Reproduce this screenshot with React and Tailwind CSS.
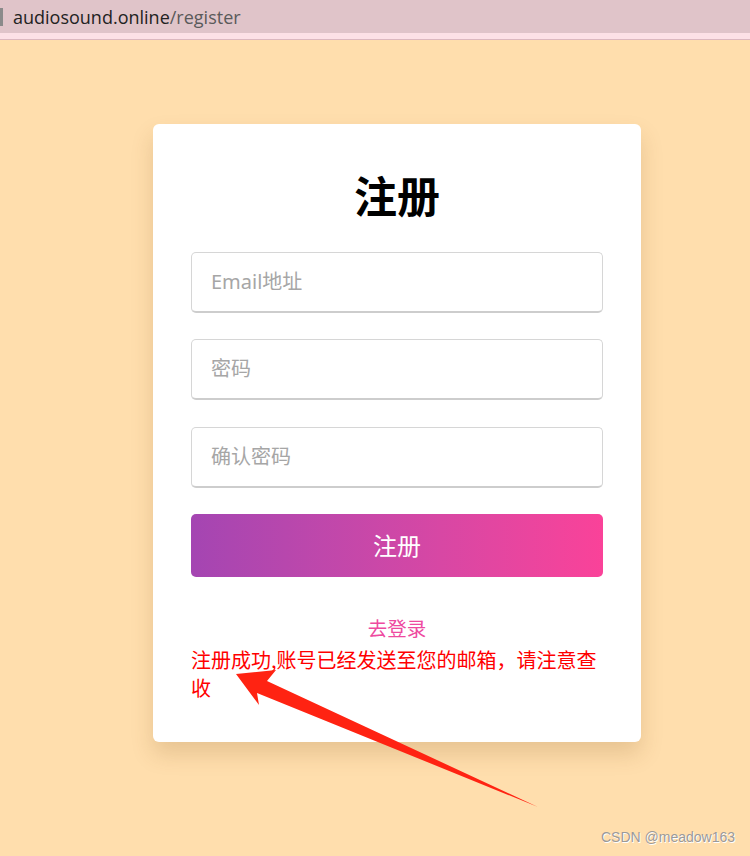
export default function App() {
  const cjk = { fontFamily: '"Noto Sans", "Noto Sans CJK SC", sans-serif' };
  return (
    <div className="relative h-[856px] w-[750px] overflow-hidden bg-[#ffdead]" style={cjk}>
      {/* browser address bar */}
      <div className="flex h-[33px] items-center bg-[#e0c4c9]">
        <div className="h-[18px] w-[3px] bg-[#8a8a8a]" />
        <div className="ml-[10px] text-[18px] leading-none text-[#222]" style={{ fontFamily: '"Open Sans", "Noto Sans", sans-serif' }}>
          audiosound.online<span className="text-[#5a5a5a]">/register</span>
        </div>
      </div>
      <div className="h-[6px] bg-[#fde1e6]" />
      <div className="h-px bg-[#dcb8bf]" />

      {/* card */}
      <div className="ml-[153px] mt-[84px] w-[488px] rounded-[6px] bg-white px-[38px] pb-[40px] pt-[45px] shadow-[0_12px_22px_rgba(120,80,20,0.18)]">
        <h1 className="h-[50px] text-center text-[43px] font-bold leading-[50px] text-black" style={{ fontFamily: '"Noto Sans CJK SC", sans-serif' }}>
          注册
        </h1>
        <div className="mt-[33px] flex flex-col">
          {['Email地址', '密码', '确认密码'].map((p, i) => (
            <div
              key={p}
              className={`flex h-[61px] items-center rounded-[5px] border border-b-2 border-[#d6d6d6] border-b-[#cdcdcd] px-[19px] text-[20px] text-[#a6a6a6] ${i === 0 ? '' : i === 1 ? 'mt-[26px]' : 'mt-[27px]'}`}
            >
              {p}
            </div>
          ))}
        </div>
        <div className="mt-[26px] flex h-[63px] items-center justify-center rounded-[5px] bg-gradient-to-r from-[#a445b2] to-[#fa4299] text-[24px] text-white">
          注册
        </div>
        <div className="mt-[38px] text-center text-[19.5px] leading-[28px] text-[#ee4aa0]">去登录</div>
        <div className="mt-[3px] text-[20px] leading-[28px] text-[#ff0000]" style={{ fontFamily: '"Noto Sans CJK SC", sans-serif' }}>
          注册成功,账号已经发送至您的邮箱，请注意查收
        </div>
      </div>

      {/* annotation arrow */}
      <svg className="pointer-events-none absolute left-0 top-0" width="750" height="856" viewBox="0 0 750 856">
        <polygon points="236,674 276,670 267,681 538,807 257,693 259,705" fill="#ff2312" />
      </svg>

      {/* watermark */}
      <div
        className="absolute bottom-[8px] right-[15px] text-[14px] text-[#9a9a9a] [text-shadow:1px_1px_0_#fff]"
        style={{ fontFamily: '"Liberation Sans", Arial, sans-serif' }}
      >
        CSDN @meadow163
      </div>
    </div>
  );
}
